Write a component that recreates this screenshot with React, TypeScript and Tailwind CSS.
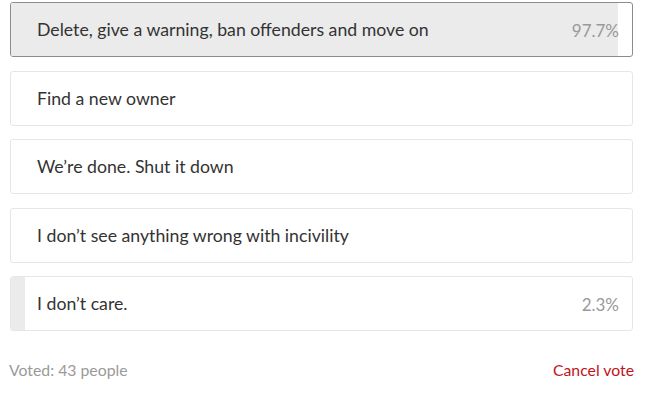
const options = [
  { label: "Delete, give a warning, ban offenders and move on", pct: 97.7, voted: true },
  { label: "Find a new owner", pct: 0 },
  { label: "We’re done. Shut it down", pct: 0 },
  { label: "I don’t see anything wrong with incivility", pct: 0 },
  { label: "I don’t care.", pct: 2.3 },
];

export default function App() {
  return (
    <div className="w-[647px] h-[403px] bg-white pt-[2px] pl-[10px]" style={{ fontFamily: "Lato, 'Open Sans', sans-serif" }}>
      <div className="w-[623px] flex flex-col gap-[13.5px]">
        {options.map((o) => (
          <div
            key={o.label}
            className={`relative h-[55px] rounded-[3px] border overflow-hidden flex items-center pt-[2px] ${o.voted ? "border-[#8c8c8c]" : "border-[#e6e6e6]"}`}
          >
            {o.pct > 0 && (
              <div className="absolute left-0 top-0 bottom-0 bg-[#ebebeb]" style={{ width: `${o.pct}%` }} />
            )}
            <span className="relative pl-[26px] text-[17.7px] text-[#333]">{o.label}</span>
            {o.pct > 0 && (
              <span className="relative ml-auto pr-[13px] text-[17px] text-[#999]">{o.pct}%</span>
            )}
          </div>
        ))}
      </div>
      <div className="w-[624px] flex justify-between items-center mt-[27px] text-[15.8px]">
        <span className="text-[#9a9a9a] -ml-[1px]">Voted: 43 people</span>
        <span className="text-[#c0141b]">Cancel vote</span>
      </div>
    </div>
  );
}
